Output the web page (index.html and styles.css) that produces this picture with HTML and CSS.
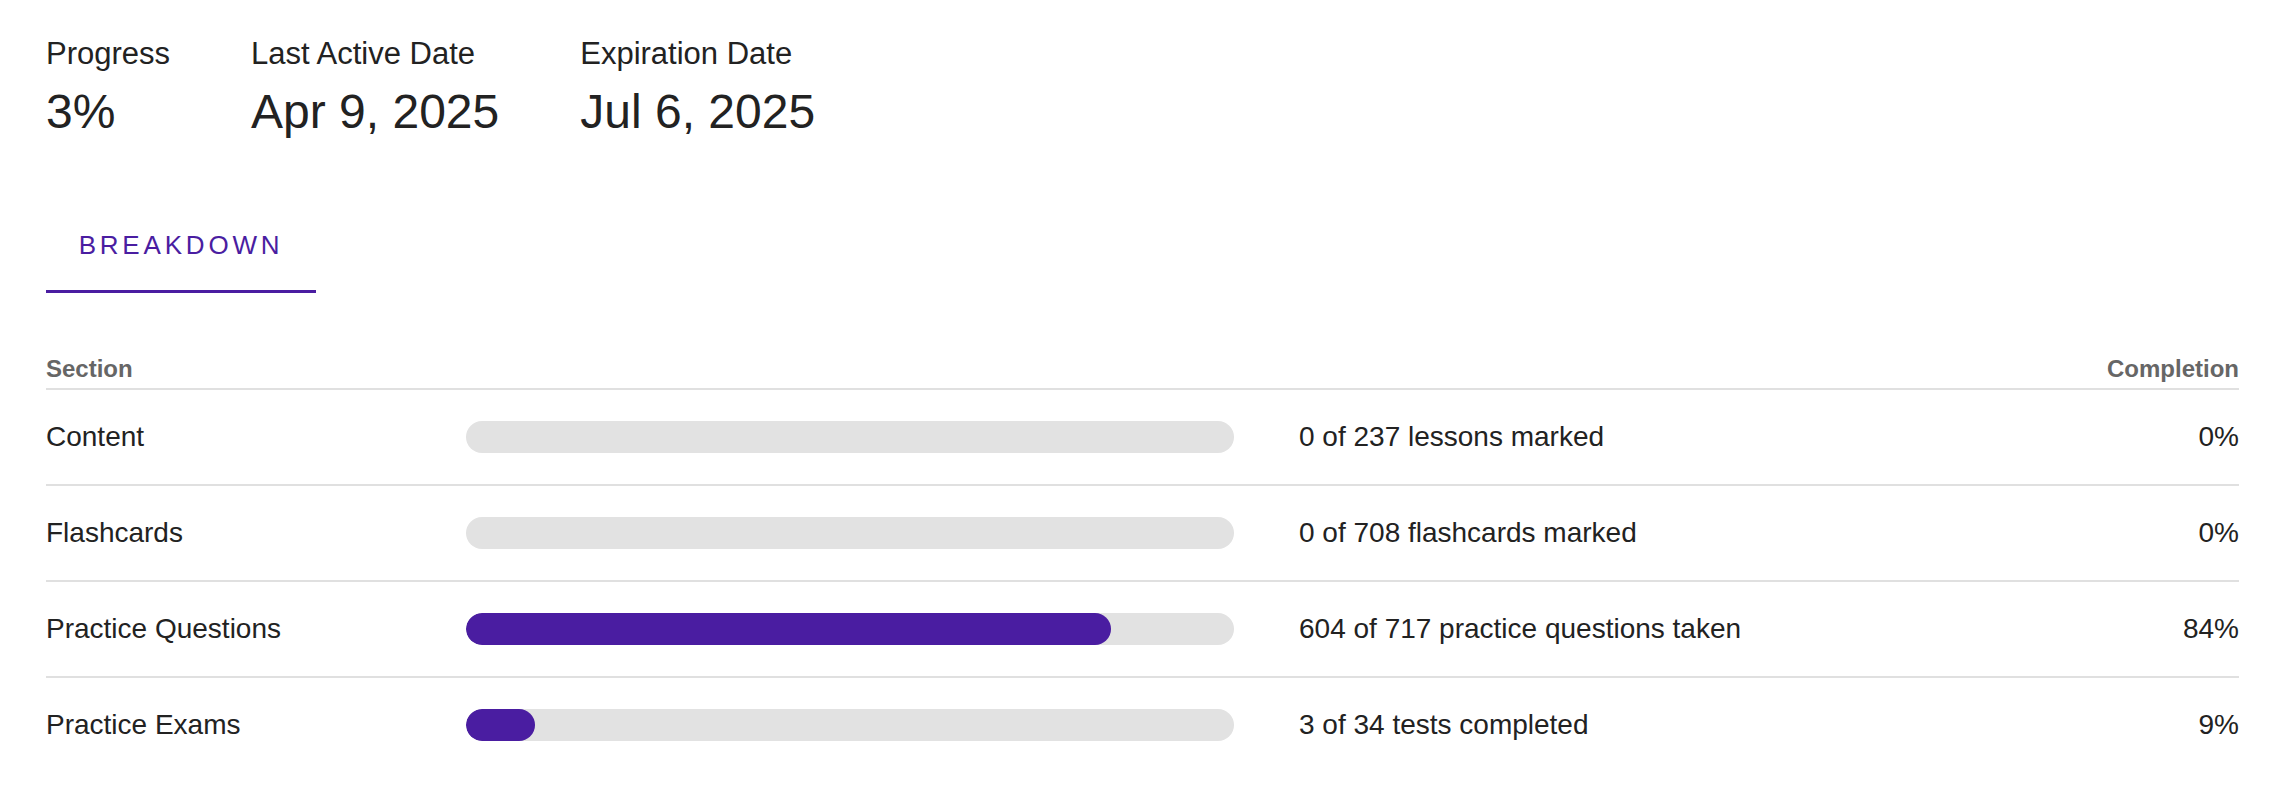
FILE: index.html
```html
<!DOCTYPE html>
<html>
<head>
  <title>Progress</title>
  <link rel="stylesheet" href="styles.css">
</head>
<body>
  <div class="page">
    <div class="stats">
      <div class="stat">
        <div class="stat-label">Progress</div>
        <div class="stat-value">3%</div>
      </div>
      <div class="stat">
        <div class="stat-label">Last Active Date</div>
        <div class="stat-value">Apr 9, 2025</div>
      </div>
      <div class="stat">
        <div class="stat-label">Expiration Date</div>
        <div class="stat-value">Jul 6, 2025</div>
      </div>
    </div>

    <div class="tabs">
      <button class="tab active">BREAKDOWN</button>
    </div>

    <div class="breakdown">
      <div class="breakdown-head">
        <span>Section</span>
        <span>Completion</span>
      </div>
      <div class="breakdown-row">
        <div class="section-name">Content</div>
        <div class="bar"><div class="bar-fill" style="width: 0%"></div></div>
        <div class="section-detail">0 of 237 lessons marked</div>
        <div class="section-pct">0%</div>
      </div>
      <div class="breakdown-row">
        <div class="section-name">Flashcards</div>
        <div class="bar"><div class="bar-fill" style="width: 0%"></div></div>
        <div class="section-detail">0 of 708 flashcards marked</div>
        <div class="section-pct">0%</div>
      </div>
      <div class="breakdown-row">
        <div class="section-name">Practice Questions</div>
        <div class="bar"><div class="bar-fill" style="width: 84%"></div></div>
        <div class="section-detail">604 of 717 practice questions taken</div>
        <div class="section-pct">84%</div>
      </div>
      <div class="breakdown-row">
        <div class="section-name">Practice Exams</div>
        <div class="bar"><div class="bar-fill" style="width: 9%"></div></div>
        <div class="section-detail">3 of 34 tests completed</div>
        <div class="section-pct">9%</div>
      </div>
    </div>
  </div>
</body>
</html>
```

FILE: styles.css
```css
:root {
  --primary-color: #4a1da1;
  --text-color: #222222;
  --muted-color: #666666;
  --border-color: #e0e0e0;
  --track-color: #e2e2e2;
}

body {
  margin: 0;
  background-color: #fff;
  color: var(--text-color);
  font-family: 'Liberation Sans', Arial, sans-serif;
}

.page {
  padding: 36px 43px 0 46px;
}

.stats {
  display: flex;
  gap: 81px;
}

.stat-label {
  font-size: 31px;
  line-height: 36px;
}

.stat-value {
  margin-top: 12px;
  font-size: 48px;
  line-height: 56px;
}

.tabs {
  display: flex;
  margin-top: 60px;
}

.tab {
  width: 270px;
  padding: 30px 0;
  background: none;
  border: none;
  border-bottom: 3px solid transparent;
  font-family: inherit;
  font-size: 26px;
  line-height: 30px;
  letter-spacing: 3.8px;
  color: var(--primary-color);
  text-align: center;
  cursor: pointer;
}

.tab.active {
  border-bottom-color: var(--primary-color);
}

.breakdown {
  margin-top: 62px;
}

.breakdown-head {
  display: flex;
  justify-content: space-between;
  padding-bottom: 5px;
  border-bottom: 2px solid var(--border-color);
  font-size: 24px;
  line-height: 28px;
  font-weight: 700;
  color: var(--muted-color);
}

.breakdown-row {
  display: grid;
  grid-template-columns: 420px 768px 1fr auto;
  align-items: center;
  height: 94px;
  border-bottom: 2px solid var(--border-color);
  font-size: 28px;
  line-height: 34px;
}

.breakdown-row:last-child {
  border-bottom: none;
}

.bar {
  height: 32px;
  border-radius: 16px;
  background-color: var(--track-color);
  overflow: hidden;
}

.bar-fill {
  height: 100%;
  border-radius: 16px;
  background-color: var(--primary-color);
}

.section-detail {
  padding-left: 65px;
}

.section-pct {
  text-align: right;
}
```
